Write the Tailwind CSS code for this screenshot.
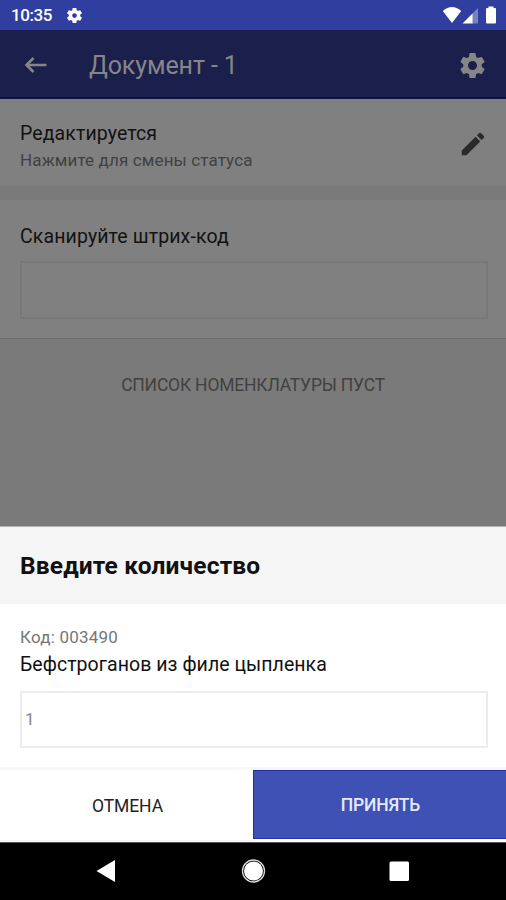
<!DOCTYPE html>
<html lang="ru">
<head>
    <meta charset="UTF-8">
    <meta name="viewport" content="width=device-width, initial-scale=1.0">
    <title>Документ - 1</title>
    <script src="https://cdn.jsdelivr.net/npm/@tailwindcss/browser@4"></script>
</head>
<body class="bg-black font-['Roboto',sans-serif]">
    <div class="w-[506px] h-[900px] flex flex-col overflow-hidden whitespace-nowrap">
        <!-- Status bar -->
        <div class="h-[30px] shrink-0 bg-[#303f9f] flex items-center text-white pl-[11px] pr-[6px]">
            <span class="text-[17px] leading-none font-medium tracking-[-0.4px] w-[54px] pt-px">10:35</span>
            <svg class="size-[19px]" viewBox="0 0 24 24" fill="currentColor"><path d="M19.14 12.94c.04-.3.06-.61.06-.94 0-.32-.02-.64-.07-.94l2.03-1.58a.49.49 0 0 0 .12-.61l-1.92-3.32a.488.488 0 0 0-.59-.22l-2.39.96c-.5-.38-1.03-.7-1.62-.94l-.36-2.54a.484.484 0 0 0-.48-.41h-3.84c-.24 0-.43.17-.47.41l-.36 2.54c-.59.24-1.13.57-1.62.94l-2.39-.96c-.22-.08-.47 0-.59.22L2.74 8.87c-.12.21-.08.47.12.61l2.03 1.58c-.05.3-.09.63-.09.94s.02.64.07.94l-2.03 1.58a.49.49 0 0 0-.12.61l1.92 3.32c.12.22.37.29.59.22l2.39-.96c.5.38 1.03.7 1.62.94l.36 2.54c.05.24.24.41.48.41h3.84c.24 0 .44-.17.47-.41l.36-2.54c.59-.24 1.13-.56 1.62-.94l2.39.96c.22.08.47 0 .59-.22l1.92-3.32c.12-.22.07-.47-.12-.61l-2.01-1.58zM12 15a3 3 0 1 1 0-6 3 3 0 0 1 0 6z"/></svg>
            <svg class="ml-auto w-[58px] h-[18px]" viewBox="0 0 58 18" fill="currentColor">
                <path d="M.8 5Q10-3 19.200 5L10 17z"/>
                <path d="M36 2v15.500H30V8z" fill-opacity=".35"/>
                <path d="M30.500 7.500V17.500H20.500z"/>
                <path d="M46.500.5h5v1.500h1.500q1 0 1 1V16.500q0 1-1 1h-8q-1 0-1-1V3q0-1 1-1h1.500z"/>
            </svg>
        </div>

        <!-- App bar -->
        <div class="h-[69px] shrink-0 bg-[#1a1f4c] border-b-2 border-[#0e1147] flex items-center text-[#868686] pl-[24px] pr-[18px] pt-[3px]">
            <svg class="w-[24px] h-[18px]" viewBox="0 0 24 18" fill="none" stroke="currentColor" stroke-width="2.6"><path d="M9.500 2L2.500 9l7 7M2.500 9H22.500"/></svg>
            <h1 class="ml-[41px] text-[25px] leading-none tracking-[-0.1px]">Документ - 1</h1>
            <svg class="ml-auto size-[31px]" viewBox="0 0 24 24" fill="currentColor"><path d="M19.14 12.94c.04-.3.06-.61.06-.94 0-.32-.02-.64-.07-.94l2.03-1.58a.49.49 0 0 0 .12-.61l-1.92-3.32a.488.488 0 0 0-.59-.22l-2.39.96c-.5-.38-1.03-.7-1.62-.94l-.36-2.54a.484.484 0 0 0-.48-.41h-3.84c-.24 0-.43.17-.47.41l-.36 2.54c-.59.24-1.13.57-1.62.94l-2.39-.96c-.22-.08-.47 0-.59.22L2.74 8.87c-.12.21-.08.47.12.61l2.03 1.58c-.05.3-.09.63-.09.94s.02.64.07.94l-2.03 1.58a.49.49 0 0 0-.12.61l1.92 3.32c.12.22.37.29.59.22l2.39-.96c.5.38 1.03.7 1.62.94l.36 2.54c.05.24.24.41.48.41h3.84c.24 0 .44-.17.47-.41l.36-2.54c.59-.24 1.13-.56 1.62-.94l2.39.96c.22.08.47 0 .59-.22l1.92-3.32c.12-.22.07-.47-.12-.61l-2.01-1.58zM12 15.500a3.500 3.500 0 1 1 0-7 3.500 3.500 0 0 1 0 7z"/></svg>
        </div>

        <!-- Document status -->
        <div class="h-[87px] shrink-0 bg-[#808080] flex items-center pl-[20px] pr-[18px]">
            <div class="pt-[7px]">
                <p class="text-[19.500px] leading-[27px] tracking-[0.1px] text-[#121212]">Редактируется</p>
                <p class="text-[17px] leading-[26px] tracking-[0.13px] text-[#414141]">Нажмите для смены статуса</p>
            </div>
            <svg class="ml-auto mt-[3px] size-[30px] text-[#2a2a2a]" viewBox="0 0 24 24" fill="currentColor"><path d="M3 17.250V21h3.750L17.810 9.940l-3.750-3.750L3 17.250zM20.710 7.040a.996.996 0 0 0 0-1.410l-2.340-2.340a.996.996 0 0 0-1.410 0l-1.830 1.830 3.750 3.750 1.830-1.830z"/></svg>
        </div>
        <div class="h-[14px] shrink-0 bg-[#7a7a7a]"></div>

        <!-- Barcode -->
        <div class="h-[139px] shrink-0 bg-[#808080] border-b border-[#6e6e6e] px-[20px] pt-[23px] pr-[18px]">
            <p class="text-[19.500px] leading-[28px] tracking-[0.12px] text-[#121212]">Сканируйте штрих-код</p>
            <div class="mt-[10px] h-[58px] border-2 border-[#787878]"></div>
        </div>
        <div class="h-[187px] shrink-0 bg-[#7a7a7a] text-center pt-[33px]">
            <p class="text-[17.500px] leading-[26px] tracking-[-0.2px] text-[#414141]">СПИСОК НОМЕНКЛАТУРЫ ПУСТ</p>
        </div>

        <!-- Quantity sheet -->
        <div class="h-[78px] shrink-0 bg-[#f5f5f5] border-t border-[#b5b5b5] flex items-center px-[20px] pt-[2px]">
            <h2 class="text-[24.500px] leading-none font-bold tracking-[0.17px] text-[#111111]">Введите количество</h2>
        </div>
        <div class="h-[163px] shrink-0 bg-white pl-[20px] pr-[18px] pt-[20px]">
            <p class="text-[17px] leading-[26px] tracking-[0.2px] text-[#767676]">Код: 003490</p>
            <p class="text-[19.500px] leading-[30px] tracking-[0.05px] text-[#111111]">Бефстроганов из филе цыпленка</p>
            <div class="mt-[11px] h-[57px] border-2 border-[#ececec] flex items-center pl-[3px] text-[17px] text-[#858585]">1</div>
        </div>
        <div class="h-[75px] shrink-0 bg-white border-t-3 border-[#f7f7f7] flex text-[17.500px]">
            <div class="w-[253px] flex items-center justify-center tracking-[-0.1px] pl-[2px] pt-[2px] text-[#222222] border-b-2 border-[#f7f7f7]">ОТМЕНА</div>
            <div class="grow h-[69px] bg-[#3f51b5] border border-r-0 border-[#1f30a8] flex items-center justify-center tracking-[-0.2px] pl-px pt-[2px] text-[#e6e9ff] font-medium">ПРИНЯТЬ</div>
        </div>

        <!-- Navigation bar -->
        <div class="grow bg-black border-t border-[#555555]">
            <svg class="w-[506px] h-[57px]" viewBox="0 843 506 57" fill="#fff">
                <path d="M96.500 871L115 860v22z"/>
                <circle cx="253.500" cy="871" r="9.500"/>
                <circle cx="253.500" cy="871" r="11" fill="none" stroke="#ddd" stroke-width="1.300"/>
                <rect x="389.500" y="861.500" width="19.500" height="19.500" rx="1.500"/>
            </svg>
        </div>
    </div>
</body>
</html>
